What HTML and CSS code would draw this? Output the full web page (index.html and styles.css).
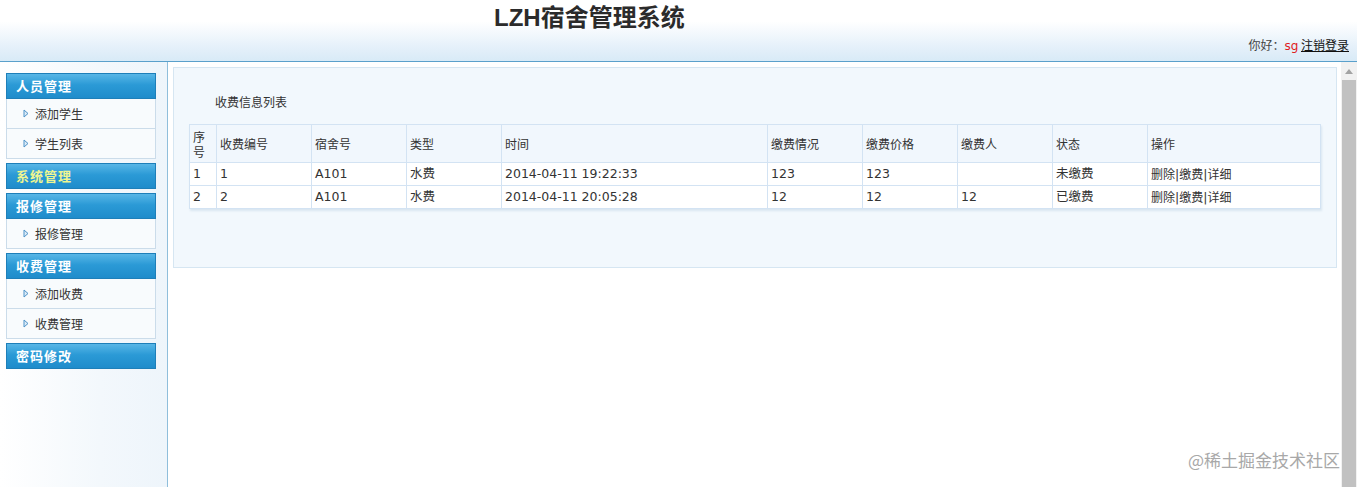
FILE: index.html
```html
<!DOCTYPE html>
<html lang="zh-CN">

<head>
  <meta charset="UTF-8" />
  <title>LZH宿舍管理系统</title>
  <link rel="stylesheet" href="styles.css">
</head>

<body>

  <header class="topo">
    <h1>LZH宿舍管理系统</h1>
    <div class="usuario">你好：<span class="nome">sg</span> <a href="#">注销登录</a></div>
  </header>

  <div class="principal">
    <aside class="lateral">
      <div class="menu">
        <div class="menu-titulo">人员管理</div>
        <a class="menu-item" href="#"><svg width="6" height="9" viewBox="0 0 6 9"><polygon points="1,1 5,4.5 1,8" fill="#dbeaf6" stroke="#4f93c9" stroke-width="1" /></svg>添加学生</a>
        <a class="menu-item" href="#"><svg width="6" height="9" viewBox="0 0 6 9"><polygon points="1,1 5,4.5 1,8" fill="#dbeaf6" stroke="#4f93c9" stroke-width="1" /></svg>学生列表</a>
      </div>
      <div class="menu">
        <div class="menu-titulo ativo">系统管理</div>
      </div>
      <div class="menu">
        <div class="menu-titulo">报修管理</div>
        <a class="menu-item" href="#"><svg width="6" height="9" viewBox="0 0 6 9"><polygon points="1,1 5,4.5 1,8" fill="#dbeaf6" stroke="#4f93c9" stroke-width="1" /></svg>报修管理</a>
      </div>
      <div class="menu">
        <div class="menu-titulo">收费管理</div>
        <a class="menu-item" href="#"><svg width="6" height="9" viewBox="0 0 6 9"><polygon points="1,1 5,4.5 1,8" fill="#dbeaf6" stroke="#4f93c9" stroke-width="1" /></svg>添加收费</a>
        <a class="menu-item" href="#"><svg width="6" height="9" viewBox="0 0 6 9"><polygon points="1,1 5,4.5 1,8" fill="#dbeaf6" stroke="#4f93c9" stroke-width="1" /></svg>收费管理</a>
      </div>
      <div class="menu">
        <div class="menu-titulo">密码修改</div>
      </div>
    </aside>

    <main class="conteudo">
      <div class="painel">
        <div class="painel-titulo">收费信息列表</div>
        <table class="tabela">
          <colgroup>
            <col style="width: 27px">
            <col style="width: 95px">
            <col style="width: 95px">
            <col style="width: 95px">
            <col style="width: 266px">
            <col style="width: 95px">
            <col style="width: 95px">
            <col style="width: 95px">
            <col style="width: 95px">
            <col style="width: 173px">
          </colgroup>
          <thead>
            <tr>
              <th>序号</th>
              <th>收费编号</th>
              <th>宿舍号</th>
              <th>类型</th>
              <th>时间</th>
              <th>缴费情况</th>
              <th>缴费价格</th>
              <th>缴费人</th>
              <th>状态</th>
              <th>操作</th>
            </tr>
          </thead>
          <tbody>
            <tr>
              <td>1</td>
              <td>1</td>
              <td>A101</td>
              <td>水费</td>
              <td>2014-04-11 19:22:33</td>
              <td>123</td>
              <td>123</td>
              <td></td>
              <td>未缴费</td>
              <td><a href="#">删除</a>|<a href="#">缴费</a>|<a href="#">详细</a></td>
            </tr>
            <tr>
              <td>2</td>
              <td>2</td>
              <td>A101</td>
              <td>水费</td>
              <td>2014-04-11 20:05:28</td>
              <td>12</td>
              <td>12</td>
              <td>12</td>
              <td>已缴费</td>
              <td><a href="#">删除</a>|<a href="#">缴费</a>|<a href="#">详细</a></td>
            </tr>
          </tbody>
        </table>
      </div>
    </main>

    <div class="rolagem">
      <div class="rolagem-seta"></div>
      <div class="rolagem-barra"></div>
    </div>
  </div>

  <div class="marca">@稀土掘金技术社区</div>

</body>

</html>
```

FILE: styles.css
```css
:root {
  --azul-linha: #5aa0cb;
  --borda-tabela: #d3e3f3;
  --texto: #333;
}

body {
  margin: 0;
  font-family: "DejaVu Sans", "Noto Sans CJK SC", sans-serif;
  font-size: 12px;
  color: var(--texto);
  background: #fff;
  overflow: hidden;
}

/* Topo */
.topo {
  height: 61px;
  border-bottom: 1px solid var(--azul-linha);
  background: linear-gradient(to bottom, #ffffff 0%, #ffffff 35%, #e6f1fa 75%, #d8eaf7 100%);
  position: relative;
}

.topo h1 {
  margin: 0;
  padding: 3px 0 0 494px;
  font-family: "Liberation Sans", "Noto Sans CJK SC", sans-serif;
  font-size: 24px;
  line-height: 30px;
  font-weight: bold;
  color: #2b2b2b;
}

.usuario {
  position: absolute;
  right: 8px;
  top: 36px;
  font-family: "Noto Sans CJK SC", sans-serif;
  line-height: 18px;
  color: #444;
}

.usuario .nome {
  font-family: "DejaVu Sans", sans-serif;
  color: #e02020;
}

.usuario a {
  color: #111;
  text-decoration: underline;
}

/* Estrutura */
.principal {
  display: flex;
  height: 425px;
}

.lateral {
  width: 167px;
  border-right: 1px solid #8fbedb;
  background: linear-gradient(to right, #ffffff 0%, #f3f8fc 60%, #eef5fb 100%);
  padding-top: 11px;
  box-sizing: content-box;
}

.menu {
  width: 150px;
  margin: 0 0 4px 6px;
}

.menu-titulo {
  height: 24px;
  line-height: 24px;
  border: 1px solid #1e7fb9;
  background: linear-gradient(to bottom, #58b6e6 0%, #2b9ad6 45%, #1f8ccb 100%);
  color: #fff;
  font-family: "Noto Sans CJK SC", sans-serif;
  font-weight: bold;
  font-size: 13px;
  letter-spacing: 1px;
  padding-left: 9px;
}

.menu-titulo.ativo {
  color: #eef590;
}

.menu-item {
  display: flex;
  align-items: center;
  gap: 6px;
  height: 29px;
  padding-left: 16px;
  border: 1px solid #cbdcea;
  border-top: none;
  background: #f8fbfd;
  color: #333;
  text-decoration: none;
  font-family: "Noto Sans CJK SC", sans-serif;
}

/* Conteudo */
.conteudo {
  flex: 1;
  padding: 5px 4px 0 5px;
}

.painel {
  height: 199px;
  border: 1px solid #d6e6f2;
  background: #f2f8fd;
  padding: 0 15px;
}

.painel-titulo {
  padding: 25px 0 0 26px;
  height: 31px;
  line-height: 18px;
  font-family: "Noto Sans CJK SC", sans-serif;
}

.tabela {
  width: 100%;
  table-layout: fixed;
  border-collapse: collapse;
  background: #fff;
  box-shadow: 1px 2px 2px #d9e6f1;
}

.tabela th,
.tabela td {
  border: 1px solid var(--borda-tabela);
  padding: 0 3px;
  text-align: left;
  font-weight: normal;
  vertical-align: middle;
}

.tabela th {
  height: 37px;
  line-height: 15px;
  background: #f1f7fd;
  font-family: "Noto Sans CJK SC", sans-serif;
  word-break: break-all;
}

.tabela td {
  height: 22px;
  line-height: 16px;
  font-size: 12.5px;
}

.tabela td a {
  color: #333;
  text-decoration: none;
  font-family: "Noto Sans CJK SC", sans-serif;
  font-size: 12px;
}

/* Barra de rolagem falsa */
.rolagem {
  width: 16px;
  background: #f1f1f1;
  display: flex;
  flex-direction: column;
  align-items: center;
}

.rolagem-seta {
  margin-top: 7px;
  width: 0;
  height: 0;
  border-left: 4px solid transparent;
  border-right: 4px solid transparent;
  border-bottom: 5px solid #a3a3a3;
}

.rolagem-barra {
  margin-top: 6px;
  width: 14px;
  flex: 1;
  background: #c1c1c1;
}

.marca {
  position: absolute;
  right: 17px;
  bottom: 15px;
  font-family: "Noto Sans CJK SC", sans-serif;
  font-size: 17px;
  color: #a8a8a8;
}
```
